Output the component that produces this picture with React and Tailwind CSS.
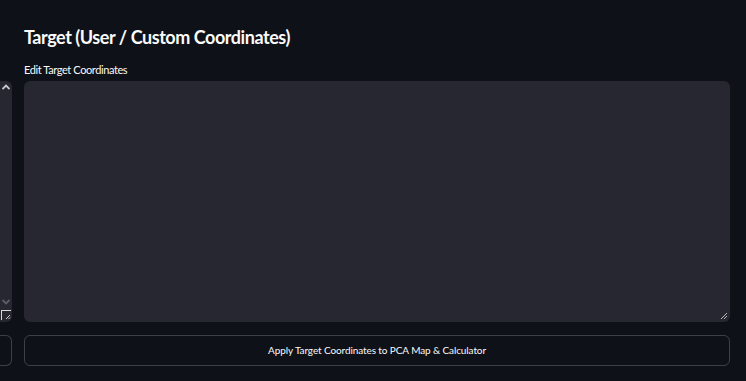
import React from 'react';

// Streamlit-like dark panel: two columns, left one clipped off-screen
function ScrollStub() {
  return (
    <div className="flex flex-col items-center justify-between h-full w-full py-[2px]">
      <svg width="8" height="6" viewBox="0 0 8 6" className="mt-[1px]">
        <path d="M0.5 5 L4 1.5 L7.5 5" stroke="#c8c8cc" strokeWidth="1.8" fill="none" />
      </svg>
      <div className="flex flex-col items-center gap-[5px]">
        <svg width="8" height="6" viewBox="0 0 8 6">
          <path d="M0.5 1 L4 4.5 L7.5 1" stroke="#5c5d66" strokeWidth="1.8" fill="none" />
        </svg>
        <div className="relative w-[10px] h-[10px] border-t border-l border-[#d8d8d8]">
          <svg width="6" height="6" viewBox="0 0 6 6" className="absolute right-0 bottom-0">
            <path d="M1 5 L5 1 M3.5 5 L5 3.5" stroke="#cfcfcf" strokeWidth="1" />
          </svg>
        </div>
      </div>
    </div>
  );
}

export default function App() {
  return (
    <div className="w-[746px] h-[381px] bg-[#0e1117] text-[#fafafa] font-['Source_Sans_Pro','Lato',sans-serif] overflow-hidden flex gap-[12px]">
      {/* left column, cut off at the viewport edge */}
      <div className="w-[12px] shrink-0 flex flex-col pt-[81px]">
        <div className="h-[241px] bg-[#262730] rounded-r-[6px] overflow-hidden">
          <ScrollStub />
        </div>
        <div className="mt-[13px] h-[31px] border border-[rgba(250,250,250,0.2)] border-l-0 rounded-r-[6px]" />
      </div>

      {/* right column */}
      <div className="flex-1 flex flex-col pr-[16px]">
        <h3 className="mt-[25px] h-[24px] text-[18px] leading-[24px] font-bold tracking-[-0.45px]">
          Target (User / Custom Coordinates)
        </h3>
        <label className="mt-[14px] text-[11px] leading-[14px] tracking-[-0.4px]">Edit Target Coordinates</label>
        <div className="mt-[4px] h-[241px] bg-[#262730] rounded-[6px] relative">
          <svg width="8" height="8" viewBox="0 0 8 8" className="absolute right-[2px] bottom-[2px]">
            <path d="M1 7 L7 1 M4 7 L7 4" stroke="#bdbdbd" strokeWidth="1" />
          </svg>
        </div>
        <button className="mt-[13px] h-[31px] w-full border border-[rgba(250,250,250,0.2)] rounded-[6px] text-[10px] tracking-[-0.1px] text-[#fafafa] flex items-center justify-center">
          Apply Target Coordinates to PCA Map &amp; Calculator
        </button>
      </div>
    </div>
  );
}
